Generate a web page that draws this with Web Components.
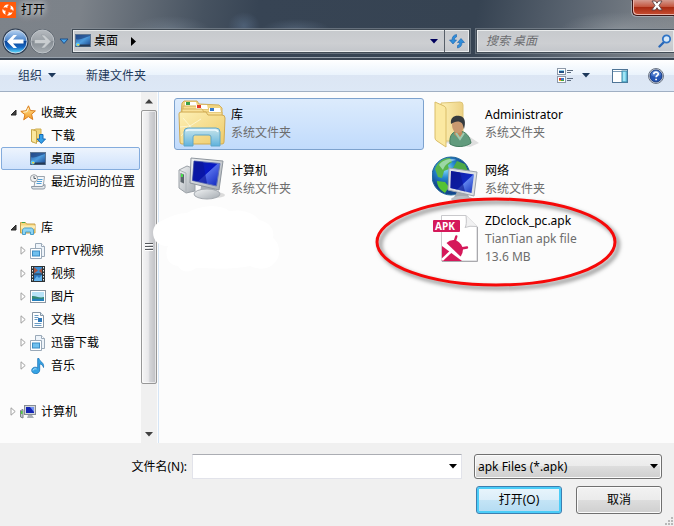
<!DOCTYPE html>
<html lang="zh-CN">
<head>
<meta charset="utf-8">
<meta name="viewport" content="width=device-width, initial-scale=1">
<title>打开</title>
<style>
  html, body { height: 100%; }
  body {
    margin: 0;
    font: 12px/18px "Noto Sans", "Noto Sans CJK SC", sans-serif;
    color: #000;
    background: #f0f0f0;
  }
</style>
</head>
<body>
<open-dialog></open-dialog>

<script>
const ICONS = {
  logo: [16, 16, `
    <rect width="16" height="16" fill="#ff5a0a"/>
    <g fill="#fff">
      <path d="M3.500 6C4 3 7 1.500 9.500 3 7.500 3.200 7 4.500 7.500 6 6 5 4.500 5 3.500 6z"/>
      <path d="M10 3.500C13 4 14.500 7 13 9.500 12.800 7.500 11.500 7 10 7.500 11 6 11 4.500 10 3.500z"/>
      <path d="M12.500 10C12 13 9 14.500 6.500 13 8.500 12.800 9 11.500 8.500 10 10 11 11.500 11 12.500 10z"/>
      <path d="M6 12.500C3 12 1.500 9 3 6.500 3.200 8.500 4.500 9 6 8.500 5 10 5 11.500 6 12.500z"/>
    </g>`],
  back: [27, 27, `
    <defs>
      <linearGradient id="g" x2="0" y2="1"><stop stop-color="#b9d4f2"/><stop offset=".48" stop-color="#4580c8"/><stop offset=".5" stop-color="#0d4596"/><stop offset=".75" stop-color="#1769c4"/><stop offset="1" stop-color="#5fe0ff"/></linearGradient>
    </defs>
    <circle cx="13.500" cy="13.500" r="13" fill="#2e3d52"/>
    <circle cx="13.500" cy="13.500" r="11.500" fill="url(#g)" stroke="#c9d6e6"/>
    <path d="M5 13.500 11.500 7H15l-4 4.500h10.500v4H11l4 4.500h-3.500z" fill="#fff"/>`],
  forward: [27, 27, `
    <defs>
      <linearGradient id="g" x2="0" y2="1"><stop stop-color="#b5babf"/><stop offset=".48" stop-color="#9ba1a7"/><stop offset=".5" stop-color="#858c93"/><stop offset="1" stop-color="#a9afb4"/></linearGradient>
    </defs>
    <circle cx="13.500" cy="13.500" r="12.500" fill="#5c656f"/>
    <circle cx="13.500" cy="13.500" r="11.500" fill="url(#g)" stroke="#bfc4c9"/>
    <path d="M22 13.500 15.500 7H12l4 4.500H5.500v4H16L12 20h3.500z" fill="#c9cdd0" stroke="#8d949a" stroke-width=".5"/>`],
  history: [10, 6, `<path d="M1 1h8L5 5.500z" fill="#4aa5ea" stroke="#1d4e86"/>`],
  down: [8, 5, `<path d="M0 0h8L4 4.500z" fill="currentColor"/>`],
  right: [5, 9, `<path d="M0 0l5 4.500L0 9z" fill="currentColor"/>`],
  up: [8, 5, `<path d="M0 4.500h8L4 0z" fill="currentColor"/>`],
  refresh: [16, 16, `
    <g fill="#2f8edb" stroke="#1a62ad" stroke-width=".6">
      <path d="M4 11 .5 7H3C3 4 4.500 2 7.500 1.500V4C6 4.500 5.300 5.500 5.300 7H7.500z"/>
      <path d="M12 5.500l3.500 4H13c0 3-1.500 5-4.500 5.500V12.500c1.500-.5 2.200-1.500 2.200-3H8.500z"/>
    </g>`],
  search: [14, 14, `
    <path d="M6 8 1.500 12.500" stroke="#2a68b8" stroke-width="2.400" stroke-linecap="round"/>
    <circle cx="8.500" cy="5" r="3.700" fill="#d6e9fa" stroke="#2f74c6" stroke-width="1.800"/>`],
  closeX: [12, 12, `
    <path d="M1 1h3.500L6 3.200 7.500 1H11L8 5.500 11.200 10H7.600L6 7.700 4.400 10H.8L4 5.500z" fill="#fff" stroke="#5b4143" stroke-width=".9"/>`],
  view: [16, 16, `
    <g fill="#fff" stroke="#8d99a8"><rect x=".5" y=".5" width="8" height="6"/><rect x=".5" y="8.500" width="8" height="6"/></g>
    <rect x="2" y="2" width="5" height="1" fill="#8ed1ec"/><rect x="2" y="3" width="5" height="2" fill="#1f4f86"/>
    <rect x="2" y="10" width="2" height="2" fill="#d8362a"/><rect x="4" y="10" width="3" height="2" fill="#3d75c4"/>
    <rect x="2" y="12" width="2" height="1" fill="#e8a820"/><rect x="4" y="12" width="3" height="1" fill="#44a53c"/>
    <path d="M10 2.500h6M10 4.500h4M10 10.500h6M10 12.500h4" stroke="#5c6c80"/>`],
  pane: [16, 14, `
    <rect x=".5" y=".5" width="15" height="13" fill="#fff" stroke="#4f7596"/>
    <path d="M1 2.500h14" stroke="#7c9cb8"/>
    <rect x="10" y="2" width="5" height="11" fill="#7ed7ee" stroke="#3f87a8"/>
    <path d="M12 3v9" stroke="#c7f2fb"/>`],
  help: [16, 16, `
    <circle cx="8" cy="8" r="7.500" fill="#d5dae2" stroke="#6b7686"/>
    <circle cx="8" cy="8" r="6" fill="#2455b4" stroke="#173a80"/>
    <path d="M3 7a5 4.500 0 0 1 10 0C10 9 6 9 3 7z" fill="#6f9be4" opacity=".55"/>
    <path d="M5.800 6.200C5.800 3.500 10.300 3.500 10.300 6c0 1.500-2.200 1.500-2.200 3.200M8.100 10.800v1.500" fill="none" stroke="#fff" stroke-width="1.700"/>`],
  open: [7, 7, `<path d="M6 1v5H1z" fill="#404040" stroke="#262626"/>`],
  closed: [7, 9, `<path d="M1 .8v7.400L5.200 4.500z" fill="#fff" stroke="#a0a0a0"/>`],
  star: [16, 16, `
    <defs><linearGradient id="g" x2="0" y2="1"><stop stop-color="#ffe69a"/><stop offset="1" stop-color="#f39a22"/></linearGradient></defs>
    <path d="M8.500.8 10.400 5.500l5 .4-3.800 3.300 1.200 5.300L8.300 11.600 3.700 14.800 4.900 9.700.8 6.300l5.300-.5z" fill="url(#g)" stroke="#db7d1c" stroke-linejoin="round"/>
    <path d="M8.400 3 7 6.700l-3.600.5" fill="none" stroke="#fff6d0"/>`],
  download: [16, 16, `
    <path d="M2 2.500 6 1h5v12l-9 1z" fill="#efd47c" stroke="#cfae52"/>
    <path d="M1.500 1.500 6.500 3v12.500l-5-2z" fill="#fbe79f" stroke="#c8a648"/>
    <path d="M9.500 6.500h3.500V11h2.500L11.300 15.500 7 11h2.500z" fill="#35a0e8" stroke="#176ab4"/>`],
  desktop: [16, 14, `
    <defs><linearGradient id="g" x2="1" y2="1"><stop stop-color="#2c5fa8"/><stop offset=".5" stop-color="#4c9bdd"/><stop offset="1" stop-color="#173f86"/></linearGradient></defs>
    <rect x=".5" y=".5" width="15" height="12" fill="url(#g)" stroke="#5d7694"/>
    <path d="M1 5C5 7 10 3 15 2V1H1z" fill="#1d3f7d" opacity=".65"/>
    <rect x="1" y="10.500" width="14" height="2" fill="#263a55"/>
    <circle cx="2.700" cy="10.500" r="2" fill="#5ec9f4"/><rect x="2.200" y="10" width="2" height="1.500" fill="#f7d13c"/>`],
  recent: [16, 16, `
    <path d="M5.500 2.500h9L13 13.500H4z" fill="#f4f7fa" stroke="#9aa4ae"/>
    <path d="M1.500 12.500h10.500l3-2v3q0 1.500-2 1.500H3q-1.500 0-1.500-2.500z" fill="#e2e6ea" stroke="#8d98a4"/>
    <path d="M7.500 5.500h5M7 7.500h5M6.500 9.500h5" stroke="#4f9ed6"/>
    <circle cx="4" cy="4.300" r="3.600" fill="#f3f3f3" stroke="#9da2a7"/>
    <path d="M4 2v2.500h2" fill="none" stroke="#55606b"/>`],
  library: [16, 14, `
    <path d="M.5 12V1.500h5l1 1.500h8.500v9z" fill="#f6d77c" stroke="#c9a048"/>
    <rect x="2" y="1" width="3" height="1" fill="#3ea44a"/>
    <path d="M1 4.500h14v3H1z" fill="#fcebb2"/>
    <path d="M2.500 13.500v-5l2-1.500h7l2 1.500v5h-3V11h-5v2.500z" fill="#8ed4f2" stroke="#4b9fc9"/>`],
  pages: [16, 16, `
    <path d="M5.500.5h6l3 3v10h-9z" fill="#eef4fa" stroke="#9aa9b8"/>
    <path d="M11.500.5v3h3" fill="#fff" stroke="#9aa9b8"/>
    <path d="M.5 5.500h11v10H.5z" fill="#fff" stroke="#9aa9b8"/>
    <rect x="2.500" y="8" width="7" height="5" fill="#6fc0ee" stroke="#3b8cc4"/>`],
  video: [14, 16, `
    <rect width="14" height="16" fill="#2c3236"/>
    <rect x="3" y="1" width="8" height="6.500" fill="#3b8ed4"/><rect x="3" y="8.500" width="8" height="6.500" fill="#2b77be"/>
    <path d="M3 1l4 3.500L3 7.500zM11 2 8 5l3 2.500z" fill="#a85540"/><path d="M3 14l3-4 2 2 3-3v6H3z" fill="#64b4ee"/>
    <path d="M1.500 1v15M12.500 1v15" stroke="#e8eef0" stroke-dasharray="1.500 1.500"/>`],
  picture: [16, 13, `
    <rect x=".5" y=".5" width="15" height="12" fill="#fff" stroke="#8b97a3"/>
    <rect x="2" y="2" width="12" height="9" fill="#b7e3f8"/>
    <path d="M2 6C6 5.500 9 8.500 14 7v4H2z" fill="#348b75"/><path d="M2 9c4-.5 7 0 12-.5V11H2z" fill="#2480bd"/>`],
  document: [14, 16, `
    <path d="M1.500.5h8l3 3v12h-11z" fill="#fff" stroke="#8796a5"/>
    <path d="M9.500.5v3h3" fill="#dce7f1" stroke="#8796a5"/>
    <path d="M3.500 3.500h4M3.500 5.500h4M3.500 7.500h3M3.500 11.500h7M3.500 13.500h7" stroke="#6b9bc3"/>
    <rect x="7" y="6" width="4" height="4" fill="#2f78ba"/>`],
  music: [14, 16, `
    <path d="M8 .5c.5 3.500 5.500 3.500 4.500 9C12 7 10 6 8.700 6v6c0 5-8 4.500-8 .5C.700 9 5 8.500 6.700 10V.5z" fill="#35a3e4" stroke="#1b74b8" stroke-width=".8"/>
    <path d="M2 12.500c0-1.500 2-2 3.500-1.500" fill="none" stroke="#b8e6fd"/>`],
  pc: [16, 14, `
    <path d="M.5 5.500 3 4.500v8.500l-2.500-1z" fill="#c1c7cc" stroke="#787f86"/><rect x="1" y="6" width="1.500" height="3" fill="#4fce42"/>
    <rect x="4.500" y=".5" width="11" height="9" fill="#d3d7dc" stroke="#868d95"/>
    <rect x="6" y="2" width="8" height="6" fill="#1425b4"/><path d="M10 2h4v5z" fill="#7290f0"/>
    <path d="M8 10h4l2 3H7z" fill="#a9afb5"/>`],
  libraryLarge: [48, 48, `
    <defs>
      <linearGradient id="g" x2="1" y2="1"><stop stop-color="#fdf0b5"/><stop offset="1" stop-color="#eecb6b"/></linearGradient>
      <linearGradient id="b" x2="0" y2="1"><stop stop-color="#c3e6f5" stop-opacity=".9"/><stop offset="1" stop-color="#5fb2dd"/></linearGradient>
    </defs>
    <path d="M3 15 4 3l2-2h13l2 3 20 1 3 3v30H3z" fill="#f1d581" stroke="#d2ae5c"/>
    <path d="M7 2h11l1 4H7z" fill="#fff"/><rect x="8" y="2" width="4" height="3" fill="#38a045"/>
    <path d="M5 10V6h14l2 3h21v7H5z" fill="#f7dd8e" stroke="#d5b361"/>
    <path d="M18 5h11l1 4H18z" fill="#fff"/><rect x="19" y="5" width="4" height="3" fill="#e33a27"/>
    <path d="M4 14V9h20l2 3h18v6H4z" fill="#f9e29a" stroke="#d5b361"/>
    <path d="M31 8h11l1 4H31z" fill="#fff"/><rect x="32" y="8" width="4" height="3" fill="#3679cc"/>
    <path d="M1 14q0-2 2-2h25l2 3h14q3 0 3 3l-1 24q0 2-2 2H4q-2 0-2-2z" fill="url(#g)" stroke="#d0aa53"/>
    <path d="M3 36 12 26 5 18M12 26l11-7M12 26l5 10M2 27l10-1" fill="none" stroke="#fffbe0" opacity=".7"/>
    <path d="M6 46V32q0-4 4-4h28q4 0 4 4v14h-9V37q0-2-2-2H17q-2 0-2 2v9z" fill="url(#b)" stroke="#5fa6c9"/>
    <path d="M8 31q1-1 3-1h26q2 0 3 2" fill="none" stroke="#eefaff" stroke-width="1.500"/>`],
  pcLarge: [48, 48, `
    <defs>
      <linearGradient id="s" x2="1" y2="1"><stop stop-color="#1020a0"/><stop offset=".5" stop-color="#0718c6"/><stop offset=".52" stop-color="#526be8"/><stop offset="1" stop-color="#0b22bb"/></linearGradient>
      <linearGradient id="m" x2="1" y2="1"><stop stop-color="#f2f4f5"/><stop offset="1" stop-color="#a5abb1"/></linearGradient>
    </defs>
    <ellipse cx="37" cy="39" rx="10" ry="3" fill="#aaa" opacity=".4"/>
    <path d="M1 14l8-4 8 3v22l-9 2-7-5z" fill="url(#m)" stroke="#9aa0a6"/>
    <path d="M1 14l7 3v20" fill="none" stroke="#aeb3b8"/><path d="M2.500 17l3.500 1.500v9L2.500 26z" fill="#5c646b"/><rect x="3" y="18" width="2" height="3" fill="#47dd4b"/>
    <path d="M23 30h13l3 8H22z" fill="#a9afb6"/><ellipse cx="29" cy="38" rx="13" ry="5" fill="url(#m)" stroke="#a5aab0"/>
    <path d="M13 2 45 5 41 34 12 27z" fill="url(#m)" stroke="#8e959d"/>
    <path d="M16 5 42 7.500 38.500 30 14.500 24.500z" fill="url(#s)" stroke="#6172b5"/>
    <path d="M16 5l9 1 4 21.500-14.500-3z" fill="#0a169a" opacity=".65"/>`],
  userLarge: [48, 48, `
    <defs><linearGradient id="g" x2="1"><stop stop-color="#fdf0b4"/><stop offset="1" stop-color="#ecd184"/></linearGradient></defs>
    <path d="M8 42 38 47l9-4-9-6z" fill="#aaa" opacity=".35"/>
    <path d="M9 3 28 2q3 0 3 3v36H12z" fill="url(#g)" stroke="#dec577"/>
    <path d="M3 2 12 6q2 1 2 3v38L5 41q-2-1-2-3z" fill="#fbe9a2" stroke="#dabd68"/>
    <path d="M18 44c-1-9 3-13 9-13 6 0 11 5 12 12-5 4-15 5-21 1z" fill="#619b7d" stroke="#447d60"/>
    <path d="M23 31h7l1 5-4 3-5-5z" fill="#bf895c"/>
    <path d="M24 33l4 6 4-6" fill="none" stroke="#9ccab1" stroke-width="2"/>
    <ellipse cx="26" cy="25" rx="6" ry="8" fill="#c99970"/>
    <path d="M19 24c-1-7 4-9 9-8 5 1 6 6 4 13-1-3-1-6-4-7-3-1-6 0-9 2z" fill="#353a3e"/>`],
  networkLarge: [48, 48, `
    <defs>
      <radialGradient id="w" cx=".35" cy=".3"><stop stop-color="#8fe2ff"/><stop offset=".5" stop-color="#2586cf"/><stop offset="1" stop-color="#12478e"/></radialGradient>
      <linearGradient id="s" x2="1" y2="1"><stop stop-color="#101aa0"/><stop offset=".55" stop-color="#1028c0"/><stop offset=".58" stop-color="#5e82ec"/><stop offset="1" stop-color="#1532b9"/></linearGradient>
    </defs>
    <circle cx="19" cy="20" r="19" fill="url(#w)" stroke="#1f6697"/>
    <path d="M3 13C6 5 12 2 18 2l2 4-4 3 1 4-5 2-2 7-4-1z" fill="#59b54b"/>
    <path d="M25 5l8 3 4 9-8 1-3-5-5-1z" fill="#4eaa47"/><path d="M5 25l8 1 4 5-4 6C8 34 5 30 5 25z" fill="#55c234"/>
    <path d="M7 9C11 3 20 2 24 4c-6 1-11 4-13 10z" fill="#dff9ff" opacity=".5"/>
    <path d="M25 36h10l3 7H21z" fill="#a4aab0"/><ellipse cx="30" cy="43" rx="11" ry="3" fill="#bbc0c5"/>
    <path d="M17 12 45 16 42 40 16 34z" fill="#dce0e4" stroke="#9ba3ab"/>
    <path d="M19 15 42 18.500 39.500 37 18.500 32z" fill="url(#s)"/>
    <path d="M19 15l9 1.400 5 19-14.500-3.400z" fill="#0a158c" opacity=".6"/>`],
  apkLarge: [48, 50, `
    <path d="M9.500 1.500H34l11 11v34.500H9.500z" fill="#fff" stroke="#c9c9cc"/>
    <path d="M45.500 13v34.500H10" fill="none" stroke="#a9a9ad"/>
    <path d="M34 1.500q1 10-1 12 4-2 12-1" fill="#f1f1f2" stroke="#c5c5c8"/>
    <rect x="1" y="6" width="27" height="12" rx="1" fill="#d5195a"/>
    <text x="3" y="16" font-family="Open Sans, sans-serif" font-size="10" font-weight="700" fill="#fff">APK</text>
    <path d="M14.500 29Q19 24.500 24.500 26.500 30 29.500 31 35 31 39.500 28.500 42.500z" fill="#d5195a"/>
    <path d="M22.500 28l1.800-5.500M29 34.500l6-1" stroke="#d5195a" stroke-width="2.400" stroke-linecap="round"/>
    <path d="M10 32l20 15H10z" fill="#d5195a"/>
    <path d="M10 46 20 36.500" stroke="#fff" stroke-width="2.500"/>`],
  grip: [10, 10, `<g fill="#b8b8b8"><path d="M7 1h2v2H7zM4 4h2v2H4zM7 4h2v2H7zM1 7h2v2H1zM4 7h2v2H4zM7 7h2v2H7z"/></g>`],
  cloud: [130, 70, `<path d="M8 17C20 11 28 8 36 8 48 0 70-1 78 6c14-2 25 2 30 9 10 2 16 9 14 18 8 6 8 20 1 25-5 7-16 7-24 3-20 4-38 2-54 2-6 5-14 5-18-2-10-1-14-10-10-20C2 42-3 24 8 17z" fill="#fff"/>`]
};

class WinIcon extends HTMLElement {
  constructor() {
    super();
    this.attachShadow({ mode: 'open' });
  }

  connectedCallback() {
    const [w, h, body] = ICONS[this.getAttribute('name')];
    this.shadowRoot.innerHTML = `
      <style>
        :host { display: inline-flex; flex: none; }
        svg { display: block; }
      </style>
      <svg width="${w}" height="${h}" viewBox="0 0 ${w} ${h}" aria-hidden="true">${body}</svg>
    `;
  }
}

class TitleBar extends HTMLElement {
  constructor() {
    super();
    this.attachShadow({ mode: 'open' }).innerHTML = `
      <style>
        :host { display: flex; align-items: flex-start; height: 28px; }
        .logo { margin-top: 2px; }
        h1 {
          flex: 1; margin: 1px 0 0 5px; font-size: 12px; font-weight: 400; line-height: 18px;
          text-shadow: 0 0 6px #fff, 0 0 9px #ffffffb0;
        }
        button {
          width: 42px; height: 16px; padding: 0 0 4px 7px; display: flex; align-items: center; justify-content: center;
          border: 1px solid #3b1414; border-width: 0 0 1px 1px; border-radius: 0 0 0 5px;
          background: linear-gradient(#d49a8f, #c4563f 45%, #a92b13 50%, #c64f33);
          box-shadow: inset 1px -1px #e9b4aa, -1px 1px #b9bec4a0;
        }
      </style>
      <win-icon class="logo" name="logo"></win-icon>
      <h1><slot></slot></h1>
      <button type="button" aria-label="关闭"><win-icon name="closeX"></win-icon></button>
    `;
  }
}

class NavBar extends HTMLElement {
  constructor() {
    super();
    this.attachShadow({ mode: 'open' }).innerHTML = `
      <style>
        :host { display: flex; align-items: center; height: 30px; padding-bottom: 4px; box-sizing: border-box; }
        button { border: 0; padding: 0; background: none; font: inherit; color: inherit; display: flex; align-items: center; justify-content: center; }
        .round { margin-left: 2px; width: 27px; }
        .round + .round { margin-left: 0; }
        .history { width: 15px; }
        .field {
          display: flex; align-items: center; box-sizing: border-box; height: 24px;
          border: 1px solid #414b55; box-shadow: inset 0 0 0 1px #e9ebec, 0 0 0 1px #8a939b90;
          background: linear-gradient(#c6c9cd, #cdcfd2 60%, #c3c6cb);
        }
        .address { flex: 1; margin: 0 6px 0 1px; padding-left: 2px; }
        .crumb { margin-left: 3px; }
        .next { margin-left: 13px; }
        .drop { margin-left: auto; width: 20px; height: 22px; color: #00005c; }
        .refresh { width: 25px; height: 22px; border-left: 1px solid #575f68; }
        .search { flex: 0 1 198px; min-width: 0; padding: 0 2px 0 9px; border-right: 0; }
        input { flex: 1; min-width: 0; border: 0; padding: 0; outline: 0; background: none; font: inherit; font-style: italic; }
        input::placeholder { color: #6c6d70; opacity: 1; }
      </style>
      <button type="button" class="round" aria-label="后退"><win-icon name="back"></win-icon></button>
      <button type="button" class="round" aria-label="前进"><win-icon name="forward"></win-icon></button>
      <button type="button" class="history" aria-label="最近浏览"><win-icon name="history"></win-icon></button>
      <div class="field address">
        <win-icon name="desktop"></win-icon>
        <button type="button" class="crumb">桌面</button>
        <win-icon class="next" name="right"></win-icon>
        <button type="button" class="drop" aria-label="历史位置"><win-icon name="down"></win-icon></button>
        <button type="button" class="refresh" aria-label="刷新"><win-icon name="refresh"></win-icon></button>
      </div>
      <div class="field search">
        <input type="search" aria-label="搜索" placeholder="搜索 桌面">
        <win-icon name="search"></win-icon>
      </div>
    `;
  }
}

class CommandBar extends HTMLElement {
  constructor() {
    super();
    this.attachShadow({ mode: 'open' }).innerHTML = `
      <style>
        :host {
          display: flex; align-items: center; height: 34px; box-sizing: border-box; padding: 0 10px 0 18px;
          border-top: 2px solid #3b4654; border-bottom: 1px solid #a0afc3; box-shadow: 0 -1px #98a2ad;
          background: linear-gradient(#fff, #eaf3fc 48%, #dce6f4 50%, #dde8f6); color: #1e395b;
        }
        button { display: flex; align-items: center; gap: 6px; border: 0; padding: 0; background: none; font: inherit; color: inherit; }
        .new { margin: 0 auto 0 30px; }
        .view { gap: 9px; }
        .pane { margin: 0 20px 0 22px; }
      </style>
      <button type="button">组织 <win-icon name="down"></win-icon></button>
      <button type="button" class="new">新建文件夹</button>
      <button type="button" class="view" aria-label="更改视图"><win-icon name="view"></win-icon><win-icon name="down"></win-icon></button>
      <button type="button" class="pane" aria-label="预览窗格"><win-icon name="pane"></win-icon></button>
      <button type="button" aria-label="帮助"><win-icon name="help"></win-icon></button>
    `;
  }
}

class TreeItem extends HTMLElement {
  constructor() {
    super();
    this.attachShadow({ mode: 'open' });
  }

  connectedCallback() {
    const state = this.getAttribute('state');
    this.shadowRoot.innerHTML = `
      <style>
        :host { display: block; }
        button {
          display: flex; align-items: center; width: 100%; height: 23px; box-sizing: border-box; padding: 0 0 0 18px;
          border: 1px solid transparent; border-radius: 2px; background: none;
          font: inherit; color: inherit; white-space: nowrap;
        }
        :host([root]) button { padding-left: 8px; }
        :host([selected]) button { border-color: #84acdd; background: linear-gradient(#edf4fd, #cfe2fc); }
        .arrow, .icon { display: flex; align-items: center; }
        .arrow { width: 10px; }
        .icon { width: 16px; justify-content: center; margin-right: 5px; }
      </style>
      <button type="button">
        <span class="arrow">${state ? `<win-icon name="${state}"></win-icon>` : ''}</span>
        <span class="icon"><win-icon name="${this.getAttribute('icon')}"></win-icon></span>
        <slot></slot>
      </button>
    `;
  }
}

class ScrollStrip extends HTMLElement {
  constructor() {
    super();
    this.attachShadow({ mode: 'open' }).innerHTML = `
      <style>
        :host { display: flex; flex-direction: column; width: 16px; background: #f0f0f0; }
        button { height: 18px; flex: none; border: 0; padding: 0; background: none; color: #404040; display: flex; align-items: center; justify-content: center; }
        .track { flex: 1; display: flex; flex-direction: column; }
        .thumb {
          flex: 0 0 87%; box-sizing: border-box; border: 1px solid #979797; border-radius: 2px;
          background: linear-gradient(90deg, #f5f5f5, #e9e9eb 45%, #d4d5d8 55%, #bfc0c4);
          box-shadow: inset 0 0 0 1px #ffffff90;
          display: flex; flex-direction: column; align-items: center; justify-content: center; gap: 1px;
        }
        i { width: 8px; height: 1px; background: #55585c; border-bottom: 1px solid #fff; }
      </style>
      <button type="button" aria-label="向上"><win-icon name="up"></win-icon></button>
      <div class="track"><div class="thumb"><i></i><i></i><i></i></div></div>
      <button type="button" aria-label="向下"><win-icon name="down"></win-icon></button>
    `;
  }
}

class NavTree extends HTMLElement {
  constructor() {
    super();
    this.attachShadow({ mode: 'open' }).innerHTML = `
      <style>
        :host { display: flex; width: 158px; flex: none; border-right: 1px solid #d6e5f5; background: #fcfcfc; }
        nav { flex: 1; min-width: 0; padding: 9px 1px 0; display: flex; flex-direction: column; gap: 23px; }
        scroll-strip { margin-right: 1px; }
      </style>
      <nav aria-label="导航窗格">
        <div>
          <tree-item root state="open" icon="star">收藏夹</tree-item>
          <tree-item icon="download">下载</tree-item>
          <tree-item icon="desktop" selected>桌面</tree-item>
          <tree-item icon="recent">最近访问的位置</tree-item>
        </div>
        <div>
          <tree-item root state="open" icon="library">库</tree-item>
          <tree-item state="closed" icon="pages">PPTV视频</tree-item>
          <tree-item state="closed" icon="video">视频</tree-item>
          <tree-item state="closed" icon="picture">图片</tree-item>
          <tree-item state="closed" icon="document">文档</tree-item>
          <tree-item state="closed" icon="pages">迅雷下载</tree-item>
          <tree-item state="closed" icon="music">音乐</tree-item>
        </div>
        <div>
          <tree-item root state="closed" icon="pc">计算机</tree-item>
        </div>
      </nav>
      <scroll-strip></scroll-strip>
    `;
  }
}

class FileTile extends HTMLElement {
  constructor() {
    super();
    this.attachShadow({ mode: 'open' });
  }

  connectedCallback() {
    this.shadowRoot.innerHTML = `
      <style>
        :host { display: block; position: relative; }
        button {
          display: flex; align-items: center; gap: 5px; width: 100%; min-height: 52px; box-sizing: border-box;
          padding: 1px 3px; border: 1px solid transparent; border-radius: 3px; background: none;
          font: inherit; color: inherit; text-align: left;
        }
        :host([selected]) button { border-color: #7da2ce; background: linear-gradient(#dcebfc, #c1dbfc); }
        .text { display: flex; flex-direction: column; min-width: 0; }
        .meta { display: flex; flex-direction: column; color: #6d6d6d; }
      </style>
      <button type="button">
        <win-icon name="${this.getAttribute('icon')}"></win-icon>
        <span class="text"><slot></slot><span class="meta"><slot name="meta"></slot></span></span>
      </button>
      <slot name="mark"></slot>
    `;
  }
}

class FileList extends HTMLElement {
  constructor() {
    super();
    this.attachShadow({ mode: 'open' }).innerHTML = `
      <style>
        :host {
          display: grid; grid-template-columns: 250px minmax(0, 250px); gap: 4px; align-content: start;
          flex: 1; min-width: 0; padding: 6px 0 0 15px; position: relative; background: #fcfcfc;
        }
        .last { grid-column: 2; }
        .cloud { position: absolute; left: -8px; top: 113px; }
        .ring { position: absolute; left: -54px; top: -14px; pointer-events: none; filter: drop-shadow(3px 3px 2px #0008); }
      </style>
      <file-tile icon="libraryLarge" selected>库<span slot="meta">系统文件夹</span></file-tile>
      <file-tile icon="userLarge">Administrator<span slot="meta">系统文件夹</span></file-tile>
      <file-tile icon="pcLarge">计算机<span slot="meta">系统文件夹</span></file-tile>
      <file-tile icon="networkLarge">网络<span slot="meta">系统文件夹</span></file-tile>
      <file-tile class="last" icon="apkLarge">ZDclock_pc.apk
        <span slot="meta">TianTian apk file</span><span slot="meta">13.6 MB</span>
        <svg slot="mark" class="ring" width="244" height="92" viewBox="0 0 244 92" aria-hidden="true">
          <ellipse cx="122" cy="46" rx="119" ry="43" fill="none" stroke="#f60909" stroke-width="3"/>
        </svg>
      </file-tile>
      <win-icon class="cloud" name="cloud"></win-icon>
    `;
  }
}

class DialogFooter extends HTMLElement {
  constructor() {
    super();
    this.attachShadow({ mode: 'open' }).innerHTML = `
      <style>
        :host { display: flex; flex-direction: column; gap: 7px; position: relative; padding: 11px 12px 12px; background: #f0f0f0; }
        .row { display: flex; align-items: center; justify-content: flex-end; }
        label { width: 175px; text-align: right; margin-right: 5px; }
        .name { flex: 1; display: flex; height: 25px; box-sizing: border-box; border: 1px solid #e2e3ea; border-top-color: #abadb3; background: #fff; }
        input { flex: 1; min-width: 0; border: 0; padding: 0 4px; outline: 0; background: none; font: inherit; }
        .name button { width: 16px; padding: 0; border: 0; background: none; display: flex; align-items: center; justify-content: center; }
        .type { position: relative; width: 188px; margin-left: 12px; }
        .type win-icon { position: absolute; right: 4px; top: 10px; pointer-events: none; }
        select, .push {
          display: block; box-sizing: border-box; border: 1px solid #707070; border-radius: 3px; font: inherit; color: #000;
          background: linear-gradient(#f2f2f2, #ebebeb 49%, #dddddd 50%, #cfcfcf); box-shadow: inset 0 0 0 1px #fbfbfb;
        }
        select { appearance: none; width: 100%; height: 25px; padding: 0 16px 0 3px; }
        .actions { gap: 14px; }
        .push { width: 86px; height: 28px; padding: 0; }
        .default { border-color: #3c7fb1; background: linear-gradient(#e9f5fc, #dbeef9 49%, #c4e4f6 50%, #b3dbf2); box-shadow: inset 0 0 0 2px #4bcdf8; }
        .grip { position: absolute; right: 0; bottom: 0; }
      </style>
      <div class="row">
        <label for="name">文件名(N):</label>
        <div class="name">
          <input id="name" type="text">
          <button type="button" aria-label="文件名列表"><win-icon name="down"></win-icon></button>
        </div>
        <div class="type">
          <select aria-label="文件类型"><option>apk Files (*.apk)</option></select>
          <win-icon name="down"></win-icon>
        </div>
      </div>
      <div class="row actions">
        <button type="button" class="push default">打开(O)</button>
        <button type="button" class="push">取消</button>
      </div>
      <win-icon class="grip" name="grip"></win-icon>
    `;
  }
}

class OpenDialog extends HTMLElement {
  constructor() {
    super();
    this.attachShadow({ mode: 'open' }).innerHTML = `
      <style>
        :host { display: flex; flex-direction: column; min-height: 100vh; }
        .glass {
          background:
            radial-gradient(ellipse 40px 14px at 170px 30px, #a3b4c640, transparent),
            radial-gradient(ellipse 16px 14px at 244px 26px, #6d87a860, transparent),
            radial-gradient(ellipse 34px 10px at 296px 29px, #8ba3c040, transparent),
            radial-gradient(ellipse 60px 18px at 620px 30px, #c3c8cc50, transparent),
            linear-gradient(100deg, #7d838a 0, #7c8289 12%, #465260 30%, #374454 38%, #364352 70%, #5a6470 84%, #858a8f 100%);
        }
        .body { flex: 1; display: flex; }
      </style>
      <div class="glass">
        <title-bar>打开</title-bar>
        <nav-bar></nav-bar>
      </div>
      <command-bar></command-bar>
      <div class="body">
        <nav-tree></nav-tree>
        <file-list></file-list>
      </div>
      <dialog-footer></dialog-footer>
    `;
  }
}

customElements.define('win-icon', WinIcon);
customElements.define('title-bar', TitleBar);
customElements.define('nav-bar', NavBar);
customElements.define('command-bar', CommandBar);
customElements.define('tree-item', TreeItem);
customElements.define('scroll-strip', ScrollStrip);
customElements.define('nav-tree', NavTree);
customElements.define('file-tile', FileTile);
customElements.define('file-list', FileList);
customElements.define('dialog-footer', DialogFooter);
customElements.define('open-dialog', OpenDialog);
</script>
</body>
</html>
